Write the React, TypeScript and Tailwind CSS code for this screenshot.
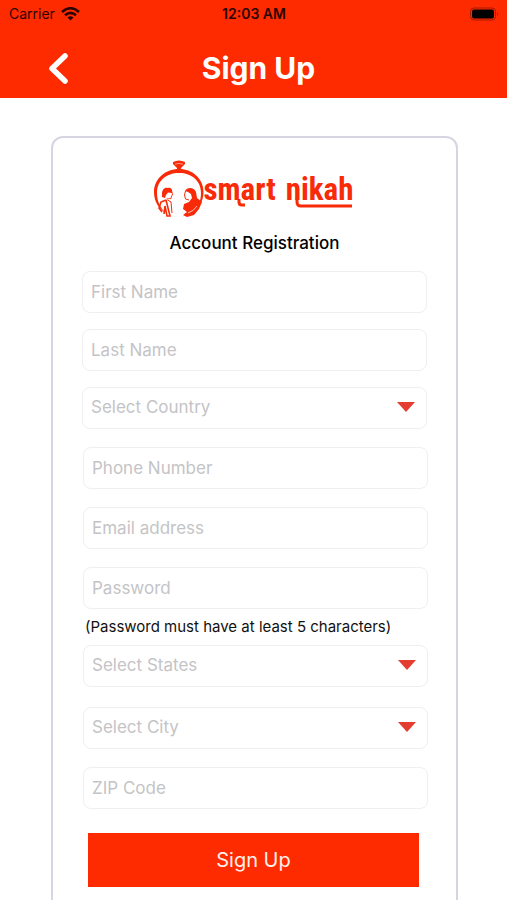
import React from "react";

const fieldBox =
  "block h-[42px] w-full rounded-lg border border-[#efeff1] bg-white px-2 text-[17px] text-[#c4c4c6] outline-none placeholder:text-[#c4c4c6] focus:border-[#c7c7d6]";

type FieldProps = { label: string; type?: string };

function TextField({ label, type = "text" }: FieldProps) {
  return <input type={type} aria-label={label} placeholder={label} className={fieldBox} />;
}

function SelectField({ label }: FieldProps) {
  return (
    <div className="relative">
      <select aria-label={label} defaultValue="" className={fieldBox + " appearance-none"}>
        <option value="">{label}</option>
      </select>
      <svg
        className="pointer-events-none absolute top-[15px] right-3 h-[10px] w-[18px]"
        viewBox="0 0 18 10"
        aria-hidden="true"
      >
        <path d="M0 0H18L9 10Z" fill="#e43d30" />
      </svg>
    </div>
  );
}

function RingMark() {
  return (
    <svg className="h-[58px] w-[50px] shrink-0" viewBox="0 0 50 58" fill="#f82a08" aria-hidden="true">
      <path d="M19 3Q25 0 31 3L31 5 27 9H23L19 5Z" />
      <path d="M21 5.200Q25 3.500 29 5.200" fill="none" stroke="#ffc4b8" strokeWidth="0.700" />
      <path d="M23 8h4v3h-4z" />
      <path
        fillRule="evenodd"
        d="M25 10C11 10 0 20 0 33 0 43 5 50 12 54 6 49 3 42 3 34 3 22 12 14 25 14S47 22 47 34C47 43 43 50 37 55 44 51 49.500 43 49.500 33 49.500 20 39 10 25 10Z"
      />
      <path d="M8 35C8 30 11 28 14 29 17 28 19 31 18 34L14 33.500 12 36 11 39 8 38Z" />
      <path d="M18 33L18.500 36 17.500 37 17 39.500 12.500 40" fill="none" stroke="#f82a08" strokeWidth="0.900" />
      <path d="M12 41L7 43 5 49 8 53M12 41L16 57 13 57 11 47 10 55" fill="none" stroke="#f82a08" strokeWidth="1.600" />
      <path d="M13.500 41L17 43 18 54" fill="none" stroke="#f82a08" strokeWidth="1" />
      <path d="M31 32C33 28 40 28 42 33L43 39 48 43 45 50 40 56 33 58 29 56 33 53 29 50 30 45 35 43 38 39 37 35 34 33Z" />
      <path d="M31.500 32L30.500 36 31.500 40 35 41" fill="none" stroke="#f82a08" strokeWidth="1" />
      <path d="M34 54Q40 52 43 47" fill="none" stroke="white" strokeWidth="0.700" />
    </svg>
  );
}

function Logo() {
  return (
    <div className="relative flex h-[58px] w-[202px] items-center text-[#f82a08]">
      <RingMark />
      <span className="flex gap-[10px] pt-1 font-['Roboto_Condensed','Liberation_Sans_Narrow',sans-serif] text-[31px] leading-8 font-bold">
        <span>smart</span>
        <span>nikah</span>
      </span>
      <svg
        className="absolute top-0 left-0 h-[58px] w-[202px]"
        viewBox="0 0 202 58"
        fill="none"
        stroke="#f82a08"
        strokeWidth="3"
        aria-hidden="true"
      >
        <path d="M85 40V43Q85 46 88 46H91" />
        <path d="M143 40V43Q143 47 147 47H198" />
      </svg>
    </div>
  );
}

function StatusBar() {
  return (
    <div className="grid h-7 grid-cols-3 items-center pr-2 pl-[9px] text-sm text-[#2b0400]">
      <div className="flex items-center gap-[6px]">
        <span>Carrier</span>
        <svg className="h-[14px] w-[19px]" viewBox="0 0 19 14" fill="none" stroke="currentColor" strokeWidth="2.600" aria-label="Wi-Fi">
          <path d="M1 5Q9.500-2.500 18 5M4 8.200Q9.500 3.500 15 8.200" />
          <path d="M6.500 10.500Q9.500 8 12.500 10.500L9.500 13.500Z" fill="currentColor" stroke="none" />
        </svg>
      </div>
      <span className="text-center font-semibold">12:03 AM</span>
      <svg className="h-[14px] w-[29px] justify-self-end" viewBox="0 0 29 14" aria-label="Battery">
        <rect x="0.500" y="1" width="25" height="12" rx="3.500" fill="none" stroke="#a51a00" />
        <rect x="2" y="2.500" width="22" height="9" rx="2" fill="#000" />
        <path d="M27 5Q29 7 27 9Z" fill="#a51a00" />
      </svg>
    </div>
  );
}

export default function App() {
  return (
    <div className="min-h-screen bg-white font-['Inter','Liberation_Sans',sans-serif]">
      <header className="bg-[#ff2b00]">
        <StatusBar />
        <div className="grid h-[70px] grid-cols-[80px_1fr_70px] items-center pt-[10px]">
          <button type="button" aria-label="Back" className="ml-auto flex h-11 w-11 items-center justify-center">
            <svg className="h-8 w-5" viewBox="0 0 20 32" fill="none" stroke="white" strokeWidth="5.500" strokeLinecap="round" strokeLinejoin="round" aria-hidden="true">
              <path d="M17 4L4 16.500 17 29" />
            </svg>
          </button>
          <h1 className="text-center text-[30px] leading-9 font-bold text-white">Sign Up</h1>
        </div>
      </header>

      <main className="pt-[38px] pr-[49px] pl-[51px]">
        <form className="rounded-xl border-2 border-[#d6d6e2] pt-[21px] pb-16" onSubmit={(e) => e.preventDefault()}>
          <div className="flex flex-col items-center">
            <Logo />
            <h2 className="mt-[14px] text-[17px] leading-6 font-medium text-black">Account Registration</h2>
          </div>

          <div className="mt-4 flex flex-col gap-4 px-[29px]">
            <TextField label="First Name" />
            <TextField label="Last Name" />
            <SelectField label="Select Country" />
          </div>

          <div className="mt-[18px] flex flex-col gap-[18px] pr-[28px] pl-[30px]">
            <TextField label="Phone Number" type="tel" />
            <TextField label="Email address" type="email" />
            <div>
              <TextField label="Password" type="password" />
              <p className="pt-2 pl-[2px] text-[15px] leading-5 text-[#111]">
                (Password must have at least 5 characters)
              </p>
              <div className="mt-2 flex flex-col gap-5">
                <SelectField label="Select States" />
                <SelectField label="Select City" />
              </div>
            </div>
            <TextField label="ZIP Code" />
          </div>

          <div className="mt-6 pr-[37px] pl-[35px]">
            <button type="submit" className="h-[54px] w-full bg-[#ff2b00] text-xl text-[#fff0ec]">
              Sign Up
            </button>
          </div>
        </form>
      </main>
    </div>
  );
}
